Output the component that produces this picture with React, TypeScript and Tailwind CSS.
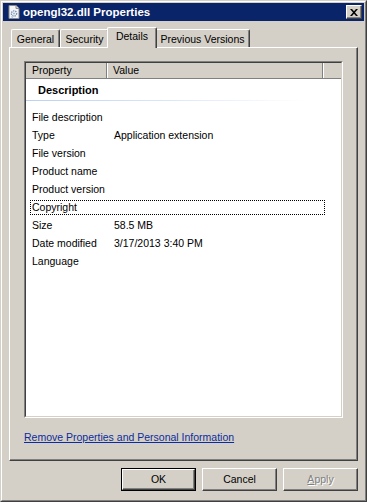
import React from "react";

const font = { fontFamily: '"Liberation Sans", Arial, sans-serif' };

function Tab({ label, w, selected }: { label: string; w: string; selected?: boolean }) {
  if (selected) {
    return (
      <div
        className={`${w} relative z-10 -mx-[2px] h-[21px] rounded-t-[2px] border-l border-t border-r border-l-white border-t-white border-r-[#404040] bg-[#d4d0c8] shadow-[inset_-1px_0_0_#808080] flex justify-center pt-[1px] leading-[15px] whitespace-nowrap`}
      >
        {label}
      </div>
    );
  }
  return (
    <div
      className={`${w} mb-px h-[18px] rounded-t-[2px] border-l border-t border-r border-l-white border-t-white border-r-[#404040] bg-[#d4d0c8] shadow-[inset_-1px_0_0_#808080] flex justify-center pt-[2px] leading-[15px] whitespace-nowrap`}
    >
      {label}
    </div>
  );
}

function Row({ name, value, focus }: { name: string; value?: string; focus?: boolean }) {
  return (
    <div
      className={`ml-[4px] w-[295px] h-[15px] flex items-center pl-[2px] leading-[15px] ${
        focus ? "outline-1 outline-dotted outline-black -outline-offset-1" : ""
      }`}
    >
      <div className="w-[82px] shrink-0 whitespace-nowrap">{name}</div>
      <div className="whitespace-nowrap">{value ?? ""}</div>
    </div>
  );
}

function Button({ label, def, disabled }: { label: React.ReactNode; def?: boolean; disabled?: boolean }) {
  const inner = (
    <div className="h-full w-full border border-l-white border-t-white border-r-[#404040] border-b-[#404040] shadow-[inset_-1px_-1px_0_#808080] flex items-center justify-center leading-[15px]">
      {label}
    </div>
  );
  if (def) {
    return <div className="w-[75px] h-[23px] border border-black">{inner}</div>;
  }
  return (
    <div className={`w-[75px] h-[23px] ${disabled ? "text-[#808080] [text-shadow:1px_1px_0_#ffffff]" : ""}`}>
      {inner}
    </div>
  );
}

export default function App() {
  const rows: { name: string; value?: string; focus?: boolean }[] = [
    { name: "File description" },
    { name: "Type", value: "Application extension" },
    { name: "File version" },
    { name: "Product name" },
    { name: "Product version" },
    { name: "Copyright", focus: true },
    { name: "Size", value: "58.5 MB" },
    { name: "Date modified", value: "3/17/2013 3:40 PM" },
    { name: "Language" },
  ];
  return (
    <div
      style={font}
      className="w-[367px] h-[502px] bg-[#d4d0c8] text-[10.5px] text-black border border-l-[#d4d0c8] border-t-[#d4d0c8] border-r-[#404040] border-b-[#404040] select-none"
    >
      <div className="h-full border border-l-white border-t-white border-r-[#808080] border-b-[#808080] p-px flex flex-col">
        {/* Title bar */}
        <div className="h-[18px] bg-[#0a246a] flex items-center pl-[3px] pr-[2px]">
          <svg width="16" height="16" viewBox="0 0 16 16" className="shrink-0">
            <path d="M3 1.5h7l3 3v10H3z" fill="#f4f4f4" stroke="#8a8a8a" />
            <path d="M10 1.5v3h3" fill="#dcdcdc" stroke="#8a8a8a" />
            <circle cx="8" cy="9.5" r="2.6" fill="none" stroke="#6f8fb8" strokeWidth="1.4" strokeDasharray="1.3 0.9" />
            <circle cx="8" cy="9.5" r="1" fill="#9fb6d6" />
            <path d="M5 12.5l2 1.5" stroke="#b0c4de" />
          </svg>
          <div className="ml-[1px] font-bold text-white text-[11.5px] leading-[14px] whitespace-nowrap">
            opengl32.dll Properties
          </div>
          <div className="flex-1" />
          <div className="w-[16px] h-[14px] bg-[#d4d0c8] border border-l-white border-t-white border-r-[#404040] border-b-[#404040] shadow-[inset_-1px_-1px_0_#808080] flex items-center justify-center">
            <svg width="8" height="7" viewBox="0 0 8 7">
              <path d="M0 0h2l2 2.2L6 0h2L5 3.5 8 7H6L4 4.8 2 7H0l3-3.5z" fill="#000" />
            </svg>
          </div>
        </div>

        {/* Body */}
        <div className="flex-1 flex flex-col px-[6px] pt-[6px]">
          <div className="flex items-end pl-[2px] -mb-px h-[21px]">
            <Tab label="General" w="w-[49px]" />
            <Tab label="Security" w="w-[49px]" />
            <Tab label="Details" w="w-[50px]" selected />
            <Tab label="Previous Versions" w="w-[95px]" />
          </div>
          <div className="h-[414px] border border-l-white border-t-white border-r-[#404040] border-b-[#404040] shadow-[inset_-1px_-1px_0_#808080] px-[14px] pt-[13px] flex flex-col">
            {/* List view */}
            <div className="h-[357px] border border-l-[#808080] border-t-[#808080] border-r-white border-b-white">
              <div className="h-full border border-l-[#404040] border-t-[#404040] border-r-[#d4d0c8] border-b-[#d4d0c8] bg-white flex flex-col">
                <div className="h-[16px] flex bg-[#d4d0c8] border-b border-b-[#808080] leading-[15px]">
                  <div className="w-[81px] border-r border-r-[#808080] pl-[6px]">Property</div>
                  <div className="w-[216px] border-l border-l-white border-r border-r-[#808080] pl-[5px]">Value</div>
                  <div className="flex-1 border-l border-l-white" />
                </div>
                <div className="h-[21px] flex items-center pl-[12px] pt-[1px] font-bold text-[11px] leading-[15px]">Description</div>
                <div className="h-px w-[280px] bg-linear-to-r from-[#bcd0f2] via-[#dbe6f8] to-white" />
                <div className="h-[9px]" />
                <div className="flex flex-col gap-[3px]">
                  {rows.map((r) => (
                    <Row key={r.name} name={r.name} value={r.value} focus={r.focus} />
                  ))}
                </div>
              </div>
            </div>
            <div className="mt-[12px] leading-[15px]">
              <span className="text-[#0c2c9c] underline underline-offset-[1px] whitespace-nowrap">
                Remove Properties and Personal Information
              </span>
            </div>
          </div>
          <div className="flex justify-end gap-[6px] mt-[7px]">
            <Button label="OK" def />
            <Button label="Cancel" />
            <Button
              label={
                <span>
                  <span className="underline">A</span>pply
                </span>
              }
              disabled
            />
          </div>
        </div>
      </div>
    </div>
  );
}
